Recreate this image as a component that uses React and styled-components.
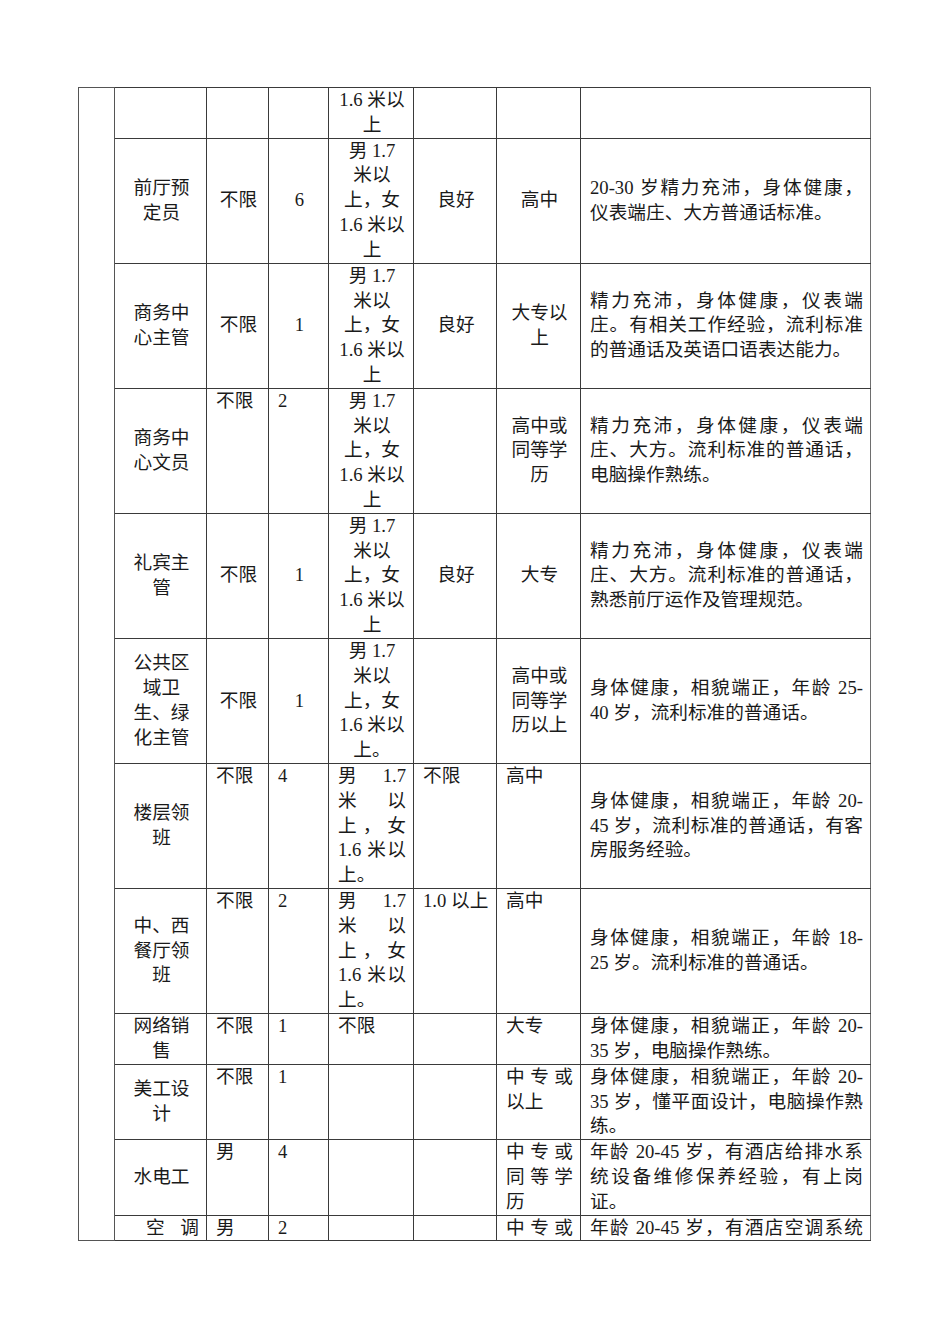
import React from "react";
import styled, { createGlobalStyle } from "styled-components";

const GlobalStyle = createGlobalStyle`
  html, body {
    margin: 0;
    padding: 0;
    background: #ffffff;
  }
`;

// column widths measured from the scanned page
const COLS = [36, 92, 62, 60, 85, 83, 84, 290];

const MALE = ["男 1.7", "米以", "上，女", "1.6 米以", "上"];
const MALE_DOT = ["男 1.7", "米以", "上，女", "1.6 米以", "上。"];

// each cell: l = lines, a = align (c centre, l left, j justify, jj justify all), v = valign
const c = (l, v = "middle") => ({ l: [].concat(l), a: "c", v });
const tl = (l) => ({ l: [].concat(l), a: "l", v: "top" });
const j = (l, v = "middle") => ({ l: [].concat(l), a: "j", v });
const jj = (l, v = "top", indent = 0) => ({ l: [].concat(l), a: "jj", v, indent });
const empty = { l: [], a: "c", v: "middle" };

const rows = [
  [empty, empty, empty, c(["1.6 米以", "上"]), empty, empty, empty],
  [
    c(["前厅预", "定员"]),
    c("不限"),
    c("6"),
    c(MALE),
    c("良好"),
    c("高中"),
    j(["20-30 岁精力充沛，身体健康，", "仪表端庄、大方普通话标准。"]),
  ],
  [
    c(["商务中", "心主管"]),
    c("不限"),
    c("1"),
    c(MALE),
    c("良好"),
    c(["大专以", "上"]),
    j(["精力充沛，身体健康，仪表端", "庄。有相关工作经验，流利标准", "的普通话及英语口语表达能力。"]),
  ],
  [
    c(["商务中", "心文员"]),
    tl("不限"),
    tl("2"),
    c(MALE),
    empty,
    c(["高中或", "同等学", "历"]),
    j(["精力充沛，身体健康，仪表端", "庄、大方。流利标准的普通话，", "电脑操作熟练。"]),
  ],
  [
    c(["礼宾主", "管"]),
    c("不限"),
    c("1"),
    c(MALE),
    c("良好"),
    c("大专"),
    j(["精力充沛，身体健康，仪表端", "庄、大方。流利标准的普通话，", "熟悉前厅运作及管理规范。"]),
  ],
  [
    c(["公共区", "域卫", "生、绿", "化主管"]),
    c("不限"),
    c("1"),
    c(MALE_DOT),
    empty,
    c(["高中或", "同等学", "历以上"]),
    j(["身体健康，相貌端正，年龄 25-", "40 岁，流利标准的普通话。"]),
  ],
  [
    c(["楼层领", "班"]),
    tl("不限"),
    tl("4"),
    j(MALE_DOT, "top"),
    tl("不限"),
    tl("高中"),
    j(["身体健康，相貌端正，年龄 20-", "45 岁，流利标准的普通话，有客", "房服务经验。"]),
  ],
  [
    c(["中、西", "餐厅领", "班"]),
    tl("不限"),
    tl("2"),
    j(MALE_DOT, "top"),
    tl("1.0 以上"),
    tl("高中"),
    j(["身体健康，相貌端正，年龄 18-", "25 岁。流利标准的普通话。"]),
  ],
  [
    c(["网络销", "售"]),
    tl("不限"),
    tl("1"),
    tl("不限"),
    empty,
    tl("大专"),
    j(["身体健康，相貌端正，年龄 20-", "35 岁，电脑操作熟练。"], "top"),
  ],
  [
    c(["美工设", "计"]),
    tl("不限"),
    tl("1"),
    empty,
    empty,
    j(["中专或", "以上"], "top"),
    j(["身体健康，相貌端正，年龄 20-", "35 岁，懂平面设计，电脑操作熟", "练。"], "top"),
  ],
  [
    c("水电工"),
    tl("男"),
    tl("4"),
    empty,
    empty,
    j(["中专或", "同等学", "历"], "top"),
    j(["年龄 20-45 岁，有酒店给排水系", "统设备维修保养经验，有上岗", "证。"], "top"),
  ],
  [
    jj("空调", "top", 22),
    tl("男"),
    tl("2"),
    empty,
    empty,
    jj("中专或"),
    jj("年龄 20-45 岁，有酒店空调系统"),
  ],
];

const App = () => {
  return (
    <Page>
      <GlobalStyle />
      <Sheet>
        <colgroup>
          {COLS.map((w, i) => (
            <col key={i} style={{ width: w }} />
          ))}
        </colgroup>
        <tbody>
          {rows.map((row, ri) => (
            <tr key={ri}>
              {ri === 0 && <SideCell rowSpan={rows.length} />}
              {row.map((cell, ci) => (
                <Cell key={ci} $valign={cell.v} $align={cell.a}>
                  {cell.l.map((text, li) => (
                    <Line
                      key={li}
                      $justify={
                        cell.a === "jj" ||
                        (cell.a === "j" && li < cell.l.length - 1)
                      }
                      $indent={cell.indent || 0}
                    >
                      {text}
                    </Line>
                  ))}
                </Cell>
              ))}
            </tr>
          ))}
        </tbody>
      </Sheet>
    </Page>
  );
};

export default App;

const Page = styled.div`
  width: 950px;
  min-height: 1344px;
  box-sizing: border-box;
  padding: 87px 0 0 78px;
  background: #ffffff;
  color: #1a1a1a;
  font-family: "Liberation Serif", "Noto Sans CJK SC", serif;
  font-size: 18.67px;
  line-height: 24.82px;
`;

const Sheet = styled.table`
  width: 793px;
  table-layout: fixed;
  border-collapse: collapse;
  border: 1.5px solid #6e6e6e;
`;

const SideCell = styled.td`
  border: 1px solid #555555;
  padding: 0;
`;

const Cell = styled.td`
  border: 1px solid #3a3a3a;
  padding: 0 7px 0 9px;
  vertical-align: ${(p) => p.$valign};
  text-align: ${(p) => (p.$align === "l" || p.$align === "j" || p.$align === "jj" ? "left" : "center")};
  &:last-child {
    border-right: 1.5px solid #6e6e6e;
  }
`;

const Line = styled.div`
  white-space: nowrap;
  text-indent: ${(p) => p.$indent}px;
  ${(p) =>
    p.$justify &&
    `
    white-space: normal;
    text-align: justify;
    text-align-last: justify;
    text-justify: inter-character;
  `}
`;
